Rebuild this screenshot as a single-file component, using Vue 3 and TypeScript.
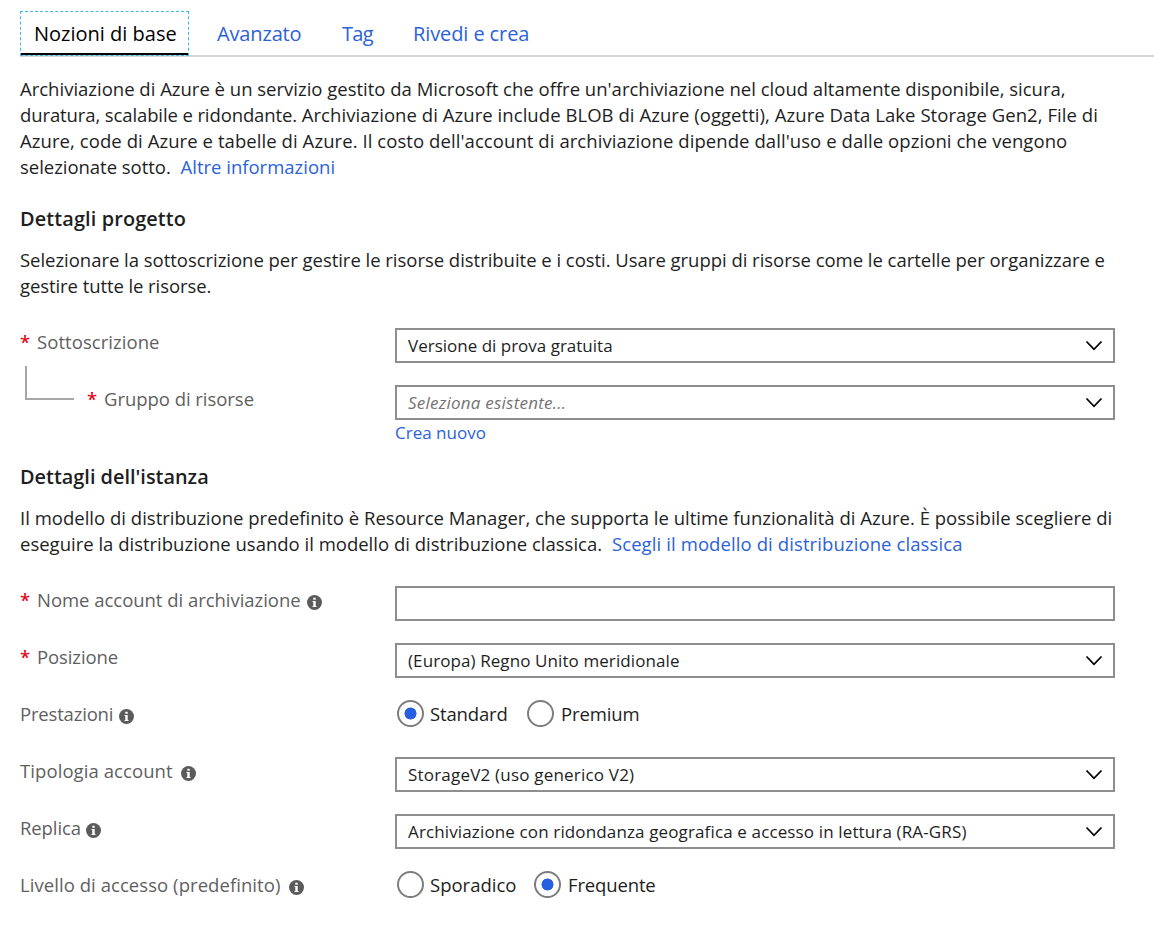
<script setup lang="ts">
import { ref } from 'vue'

interface Field {
  id: string
  label: string
  kind: 'select' | 'input' | 'radio'
  required?: boolean
  info?: boolean
  value?: string
  options?: string[]
}

const tabs: string[] = ['Nozioni di base', 'Avanzato', 'Tag', 'Rivedi e crea']
const activeTab = ref(0)

const fields = ref<Field[]>([
  { id: 'nome', label: 'Nome account di archiviazione', kind: 'input', required: true, info: true },
  { id: 'posizione', label: 'Posizione', kind: 'select', required: true, value: '(Europa) Regno Unito meridionale' },
  { id: 'prestazioni', label: 'Prestazioni', kind: 'radio', info: true, value: 'Standard', options: ['Standard', 'Premium'] },
  { id: 'tipologia', label: 'Tipologia account', kind: 'select', info: true, value: 'StorageV2 (uso generico V2)' },
  { id: 'replica', label: 'Replica', kind: 'select', info: true, value: 'Archiviazione con ridondanza geografica e accesso in lettura (RA-GRS)' },
  { id: 'livello', label: 'Livello di accesso (predefinito)', kind: 'radio', info: true, value: 'Frequente', options: ['Sporadico', 'Frequente'] },
])
</script>

<template>
  <main class="page">
    <nav class="tabs">
      <button v-for="(tab, i) in tabs" :key="tab" class="tab" :class="['tab-' + i, { active: activeTab === i }]" @click="activeTab = i">
        <span>{{ tab }}</span>
      </button>
    </nav>

    <p class="text intro">
      <span class="line">Archiviazione di Azure è un servizio gestito da Microsoft che offre un'archiviazione nel cloud altamente disponibile, sicura,</span>
      <span class="line intro-1"><span class="tight">duratura, scalabile e ridondante. </span>Archiviazione di Azure include BLOB di Azure (oggetti), Azure Data Lake Storage Gen2, File di</span>
      <span class="line intro-2">Azure, code di Azure e tabelle di Azure. Il costo dell'account di archiviazione dipende dall'uso e dalle opzioni che vengono</span>
      <span class="line intro-3">selezionate sotto. <a class="link more">Altre informazioni</a></span>
    </p>

    <h2 class="heading project">Dettagli progetto</h2>
    <p class="text project-text">
      <span class="line project-0">Selezionare la sottoscrizione per gestire le risorse distribuite e i costi. Usare gruppi di risorse come le cartelle per organizzare e</span>
      <span class="line project-1">gestire tutte le risorse.</span>
    </p>

    <div class="field first">
      <div class="label"><span class="star">*</span><span class="l-sottoscrizione">Sottoscrizione</span></div>
      <div class="box">
        <span>Versione di prova gratuita</span>
        <svg class="chevron" viewBox="0 0 18 12"><path d="M1.5 1.5 L9 9.3 L16.5 1.5" /></svg>
      </div>
    </div>
    <div class="field group">
      <div class="label nested">
        <i class="branch"></i><span class="star">*</span><span class="l-gruppo">Gruppo di risorse</span>
      </div>
      <div class="control">
        <div class="box">
          <span class="placeholder">Seleziona esistente...</span>
          <svg class="chevron" viewBox="0 0 18 12"><path d="M1.5 1.5 L9 9.3 L16.5 1.5" /></svg>
        </div>
        <a class="link create">Crea nuovo</a>
      </div>
    </div>

    <h2 class="heading instance">Dettagli dell'istanza</h2>
    <p class="text instance-text">
      <span class="line instance-0">Il modello di distribuzione predefinito è Resource Manager, che supporta le ultime funzionalità di Azure. È possibile scegliere di</span>
      <span class="line instance-1">eseguire la distribuzione usando il modello di distribuzione classica. <a class="link classic">Scegli il modello di distribuzione classica</a></span>
    </p>

    <div class="fields">
      <div v-for="field in fields" :key="field.id" class="field">
        <div class="label">
          <span v-if="field.required" class="star">*</span>
          <span :class="'l-' + field.id">{{ field.label }}</span>
          <svg v-if="field.info" class="info" :class="'i-' + field.id" viewBox="0 0 15 15">
            <circle cx="7.5" cy="7.5" r="7.5" />
            <path d="M6.3 2.7H8.7V4.7H6.3Z M5.5 6H8.7V10.9H9.5V12H5.5V10.9H6.3V7.1H5.5Z" />
          </svg>
        </div>
        <div v-if="field.kind === 'radio'" class="radios">
          <div v-for="option in field.options" :key="option" class="radio" :class="'r-' + option.toLowerCase()" @click="field.value = option">
            <i class="dot" :class="{ checked: field.value === option }"></i>
            <span>{{ option }}</span>
          </div>
        </div>
        <div v-else class="box">
          <span :class="'v-' + field.id">{{ field.value }}</span>
          <svg v-if="field.kind === 'select'" class="chevron" viewBox="0 0 18 12"><path d="M1.5 1.5 L9 9.3 L16.5 1.5" /></svg>
        </div>
      </div>
    </div>
  </main>
</template>

<style>
body {
  margin: 0;
  background: #fff;
}
</style>

<style scoped>
.page {
  box-sizing: border-box;
  width: 1154px;
  height: 925px;
  padding: 11px 0 0 20px;
  overflow: hidden;
  background: #fff;
  color: #1e1e1e;
  font: 18.5px/26px "Open Sans", "Noto Sans", sans-serif;
  white-space: nowrap;
}
.tabs {
  display: flex;
  height: 44px;
  border-bottom: 2px solid #d4d4d4;
}
.tab {
  box-sizing: border-box;
  height: 45px;
  margin: 0;
  padding: 0;
  border: 0;
  background: none;
  color: #2b62db;
  font: 20px/45px "Open Sans", "Noto Sans", sans-serif;
  text-align: left;
}
.tab-0 { width: 169px; margin-right: 28px; }
.tab-1 { width: 125px; letter-spacing: -0.15px; }
.tab-2 { width: 71px; letter-spacing: -0.7px; }
.tab-3 { letter-spacing: -0.1px; }
.tab.active {
  border: 1px dashed #41b6e6;
  padding-left: 13px;
  color: #000;
  line-height: 43px;
  box-shadow: inset 0 -2px #000;
}
.text { margin: 0; }
.intro { padding-top: 19px; }
.line { display: block; height: 26px; }
.intro-1 { letter-spacing: 0.055px; }
.tight { letter-spacing: -0.11px; }
.intro-2 { letter-spacing: 0.073px; }
.intro-3 { letter-spacing: -0.03px; }
.project-0 { letter-spacing: -0.028px; }
.project-1 { letter-spacing: -0.08px; }
.instance-0 { letter-spacing: 0.01px; }
.link { color: #2b62db; }
.more, .classic { margin-left: 5px; }
.more { letter-spacing: 0; }
.classic { letter-spacing: 0.1px; }
.heading {
  margin: 0;
  font-size: 19.9px;
  font-weight: 600;
  line-height: 26px;
}
.project { margin-top: 26px; letter-spacing: 0.12px; }
.project-text { margin-top: 15px; }
.field {
  display: flex;
  height: 57px;
}
.first { margin-top: 29px; }
.group { height: 58px; }
.label {
  display: flex;
  flex: none;
  width: 375px;
  height: 28px;
  align-items: center;
  color: #5f5f5f;
}
.star {
  width: 17px;
  color: #e00b1c;
  font-weight: 600;
}
.branch {
  align-self: flex-end;
  width: 47px;
  height: 32px;
  margin: 0 13px 13px 5px;
  border: solid #a6a6a6;
  border-width: 0 0 2px 2px;
}
.box {
  box-sizing: border-box;
  display: flex;
  width: 720px;
  height: 35px;
  padding: 0 10.5px 0 11px;
  border: 2px solid #8e8e8e;
  align-items: center;
  justify-content: space-between;
  font-size: 17px;
}
.chevron {
  width: 18px;
  height: 12px;
  margin-top: 1px;
  fill: none;
  stroke: #000;
  stroke-width: 1.8;
}
.placeholder { color: #737373; font-style: italic; letter-spacing: 0.23px; }
.v-posizione { letter-spacing: 0.09px; }
.v-tipologia { letter-spacing: 0.2px; }
.v-replica { letter-spacing: 0.135px; }
.create { display: block; font-size: 17px; }
.instance { margin-top: 21px; }
.instance-text { margin-top: 15px; }
.fields { margin-top: 29px; }
.l-sottoscrizione { letter-spacing: 0.06px; }
.l-gruppo { letter-spacing: -0.04px; }
.l-nome { letter-spacing: -0.03px; }
.l-posizione { letter-spacing: -0.1px; }
.l-prestazioni { letter-spacing: -0.18px; }
.l-tipologia { letter-spacing: 0.08px; }
.l-replica { letter-spacing: -0.1px; }
.l-livello { letter-spacing: 0.06px; }
.info {
  width: 15px;
  height: 15px;
  margin: 5px 0 0 6px;
  fill: #5b5b5b;
}
.info path { fill: #fff; }
.i-replica { margin-left: 5px; }
.i-tipologia { margin-left: 8px; }
.i-livello { margin-left: 9px; }
.radios {
  display: flex;
  height: 27px;
  padding-left: 2px;
}
.radio {
  display: flex;
  align-items: center;
}
.radio span { padding-top: 1px; letter-spacing: -0.14px; }
.r-standard { width: 130px; }
.r-sporadico { width: 137px; }
.radio.r-sporadico span { letter-spacing: 0; }
.r-premium span, .r-frequente span { padding-left: 1px; }
.dot {
  box-sizing: border-box;
  width: 27px;
  height: 27px;
  margin-right: 6px;
  border: 2px solid #7d7d7d;
  border-radius: 50%;
}
.checked { background: radial-gradient(circle, #265fdf 5.7px, #fff 6.3px); }
</style>
